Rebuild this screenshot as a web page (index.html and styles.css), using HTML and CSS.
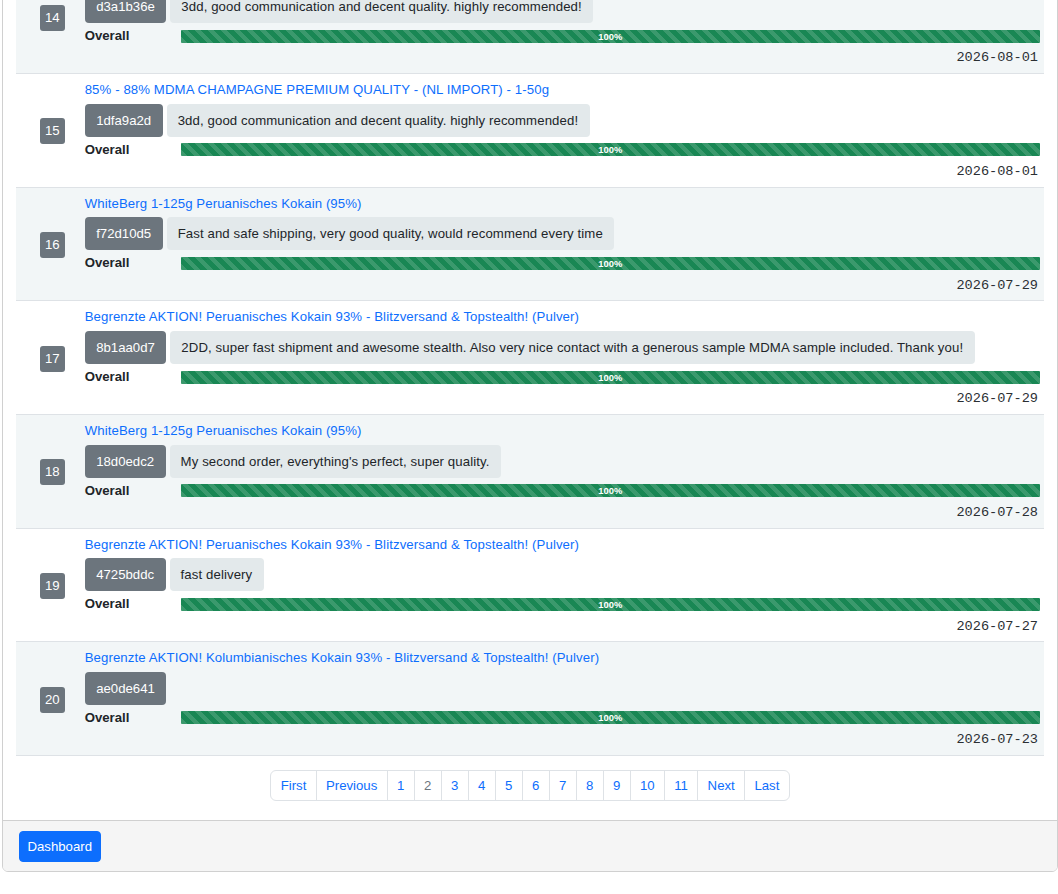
FILE: index.html
```html
<!DOCTYPE html>
<html lang="en">
<head>
    <meta charset="UTF-8">
    <meta name="viewport" content="width=device-width, initial-scale=1.0">
    <title>Reviews</title>
    <link rel="stylesheet" href="styles.css">
</head>
<body>
    <div class="card">
        <div class="card-body">
            <table class="review-table">
                <tbody>
                    <tr>
                        <td class="num"><span class="num-badge">14</span></td>
                        <td class="review">
                            <a class="product" href="#">85% - 88% MDMA CHAMPAGNE PREMIUM QUALITY - (NL IMPORT) - 1-50g</a>
                            <div class="message">
                                <span class="buyer">d3a1b36e</span>
                                <span class="text">3dd, good communication and decent quality. highly recommended!</span>
                            </div>
                            <div class="rating">
                                <span class="rating-label">Overall</span>
                                <div class="progress"><div class="progress-bar" style="width: 100%">100%</div></div>
                            </div>
                            <div class="date">2026-08-01</div>
                        </td>
                    </tr>
                    <tr>
                        <td class="num"><span class="num-badge">15</span></td>
                        <td class="review">
                            <a class="product" href="#">85% - 88% MDMA CHAMPAGNE PREMIUM QUALITY - (NL IMPORT) - 1-50g</a>
                            <div class="message">
                                <span class="buyer">1dfa9a2d</span>
                                <span class="text">3dd, good communication and decent quality. highly recommended!</span>
                            </div>
                            <div class="rating">
                                <span class="rating-label">Overall</span>
                                <div class="progress"><div class="progress-bar" style="width: 100%">100%</div></div>
                            </div>
                            <div class="date">2026-08-01</div>
                        </td>
                    </tr>
                    <tr>
                        <td class="num"><span class="num-badge">16</span></td>
                        <td class="review">
                            <a class="product" href="#">WhiteBerg 1-125g Peruanisches Kokain (95%)</a>
                            <div class="message">
                                <span class="buyer">f72d10d5</span>
                                <span class="text">Fast and safe shipping, very good quality, would recommend every time</span>
                            </div>
                            <div class="rating">
                                <span class="rating-label">Overall</span>
                                <div class="progress"><div class="progress-bar" style="width: 100%">100%</div></div>
                            </div>
                            <div class="date">2026-07-29</div>
                        </td>
                    </tr>
                    <tr>
                        <td class="num"><span class="num-badge">17</span></td>
                        <td class="review">
                            <a class="product" href="#">Begrenzte AKTION! Peruanisches Kokain 93% - Blitzversand &amp; Topstealth! (Pulver)</a>
                            <div class="message">
                                <span class="buyer">8b1aa0d7</span>
                                <span class="text">2DD, super fast shipment and awesome stealth. Also very nice contact with a generous sample MDMA sample included. Thank you!</span>
                            </div>
                            <div class="rating">
                                <span class="rating-label">Overall</span>
                                <div class="progress"><div class="progress-bar" style="width: 100%">100%</div></div>
                            </div>
                            <div class="date">2026-07-29</div>
                        </td>
                    </tr>
                    <tr>
                        <td class="num"><span class="num-badge">18</span></td>
                        <td class="review">
                            <a class="product" href="#">WhiteBerg 1-125g Peruanisches Kokain (95%)</a>
                            <div class="message">
                                <span class="buyer">18d0edc2</span>
                                <span class="text">My second order, everything's perfect, super quality.</span>
                            </div>
                            <div class="rating">
                                <span class="rating-label">Overall</span>
                                <div class="progress"><div class="progress-bar" style="width: 100%">100%</div></div>
                            </div>
                            <div class="date">2026-07-28</div>
                        </td>
                    </tr>
                    <tr>
                        <td class="num"><span class="num-badge">19</span></td>
                        <td class="review">
                            <a class="product" href="#">Begrenzte AKTION! Peruanisches Kokain 93% - Blitzversand &amp; Topstealth! (Pulver)</a>
                            <div class="message">
                                <span class="buyer">4725bddc</span>
                                <span class="text">fast delivery</span>
                            </div>
                            <div class="rating">
                                <span class="rating-label">Overall</span>
                                <div class="progress"><div class="progress-bar" style="width: 100%">100%</div></div>
                            </div>
                            <div class="date">2026-07-27</div>
                        </td>
                    </tr>
                    <tr>
                        <td class="num"><span class="num-badge">20</span></td>
                        <td class="review">
                            <a class="product" href="#">Begrenzte AKTION! Kolumbianisches Kokain 93% - Blitzversand &amp; Topstealth! (Pulver)</a>
                            <div class="message">
                                <span class="buyer">ae0de641</span>
                            </div>
                            <div class="rating">
                                <span class="rating-label">Overall</span>
                                <div class="progress"><div class="progress-bar" style="width: 100%">100%</div></div>
                            </div>
                            <div class="date">2026-07-23</div>
                        </td>
                    </tr>
                </tbody>
            </table>

            <ul class="pager">
                <li><a href="#">First</a></li>
                <li><a href="#">Previous</a></li>
                <li><a href="#">1</a></li>
                <li class="current"><span>2</span></li>
                <li><a href="#">3</a></li>
                <li><a href="#">4</a></li>
                <li><a href="#">5</a></li>
                <li><a href="#">6</a></li>
                <li><a href="#">7</a></li>
                <li><a href="#">8</a></li>
                <li><a href="#">9</a></li>
                <li><a href="#">10</a></li>
                <li><a href="#">11</a></li>
                <li><a href="#">Next</a></li>
                <li><a href="#">Last</a></li>
            </ul>
        </div>
        <div class="card-footer">
            <a class="btn" href="#">Dashboard</a>
        </div>
    </div>
</body>
</html>
```

FILE: styles.css
```css
/* Page */
body {
    margin: 0;
    font-family: "Liberation Sans", Arial, sans-serif;
    font-size: 13.2px;
    line-height: 1.5;
    color: #212529;
    background: #fff;
}

/* Card (list is scrolled down to the last reviews) */
.card {
    margin: -53.67px 0 0 2px;
    border: 1px solid #d0d0d0;
    border-radius: 6px;
    background: #fff;
}

.card-body {
    padding: 13px 13px 19px;
}

/* Reviews table */
.review-table {
    width: 100%;
    border-collapse: separate;
    border-spacing: 0;
}

.review-table td {
    padding: 6px 4px 4.17px;
    border-bottom: 1px solid #dee2e6;
    vertical-align: middle;
}

.review-table tr:nth-child(odd) td {
    background: #f2f6f7;
}

.review-table td.num {
    width: 1px;
    padding-left: 24px;
    padding-right: 16px;
    white-space: nowrap;
}

.num-badge {
    display: block;
    width: fit-content;
    padding: 4px 5px;
    line-height: 18px;
    background: #6c757d;
    color: #fff;
    border-radius: 3px;
}

.product {
    display: block;
    line-height: 19.8px;
    letter-spacing: 0.1px;
    color: #0d6efd;
    text-decoration: none;
}

.message {
    display: flex;
    align-items: flex-start;
    gap: 4px;
    margin-top: 4px;
}

.buyer,
.text {
    padding: 7px 11.5px;
    line-height: 19px;
    border-radius: 4px;
}

.buyer {
    background: #6c757d;
    color: #fff;
}

.text {
    background: #e3e9eb;
    padding-left: 11px;
    letter-spacing: 0.1px;
}

/* Rating bar */
.rating {
    display: grid;
    grid-template-columns: 96px 1fr;
    align-items: center;
    margin-top: 3px;
    line-height: 19.8px;
}

.rating-label {
    font-weight: bold;
}

.progress {
    display: flex;
    height: 13px;
    background: #e9ecef;
    border-radius: 1px;
    overflow: hidden;
}

.progress-bar {
    display: flex;
    align-items: center;
    justify-content: center;
    background-color: #198754;
    background-image: linear-gradient(45deg, rgba(255,255,255,.15) 25%, transparent 25%, transparent 50%, rgba(255,255,255,.15) 50%, rgba(255,255,255,.15) 75%, transparent 75%, transparent);
    background-size: 13px 13px;
    color: #fff;
    font-size: 9.4px;
    font-weight: bold;
    line-height: 13px;
}

.date {
    margin-top: 2.5px;
    padding-right: 2px;
    text-align: right;
    font-family: "Liberation Mono", "Courier New", monospace;
    font-size: 13.6px;
    line-height: 20.4px;
    color: #2b2f33;
}

/* Pagination */
.pager {
    display: flex;
    justify-content: center;
    list-style: none;
    margin: 14px 0 0;
    padding: 0;
}

.pager li a,
.pager li span {
    display: block;
    margin-left: -1px;
    padding: 5px 9.33px;
    line-height: 19px;
    border: 1px solid #dee2e6;
    background: #fff;
    color: #0d6efd;
    text-decoration: none;
}

.pager li:first-child a {
    margin-left: 0;
    border-radius: 6px 0 0 6px;
}

.pager li:last-child a {
    border-radius: 0 6px 6px 0;
}

.pager li.current span {
    color: #6c757d;
}

/* Footer */
.card-footer {
    display: flex;
    padding: 10px 16px 9px;
    background: #f5f5f5;
    border-top: 1px solid #d0d0d0;
    border-radius: 0 0 5px 5px;
}

.btn {
    display: block;
    padding: 4px 7.5px;
    line-height: 21px;
    background: #0d6efd;
    border: 1px solid #0d6efd;
    border-radius: 4px;
    color: #fff;
    text-decoration: none;
}
```
